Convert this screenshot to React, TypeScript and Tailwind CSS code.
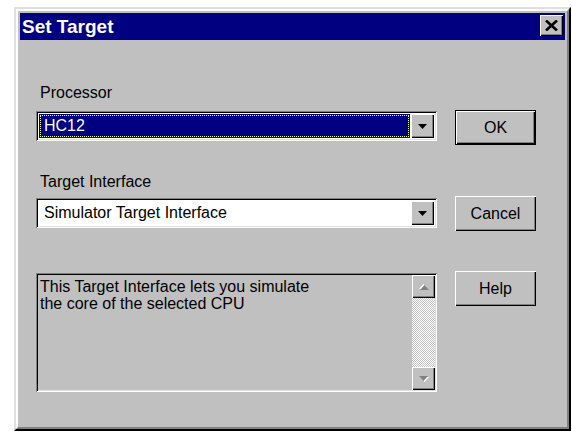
import React from 'react'

const raised =
  'bg-[#c0c0c0] shadow-[inset_1px_1px_#fff,inset_-1px_-1px_#000,inset_-2px_-2px_#808080]'
const sunken =
  'shadow-[inset_1px_1px_#808080,inset_-1px_-1px_#fff,inset_2px_2px_#000,inset_-2px_-2px_#dfdfdf]'

function DownArrow({ color = '#000' }: { color?: string }) {
  return (
    <svg width="9" height="5" viewBox="0 0 9 5">
      <path d="M0 0h9L4.5 5z" fill={color} />
    </svg>
  )
}

function Combo({ value, selected }: { value: string; selected?: boolean }) {
  return (
    <div className={`w-[401px] h-[30px] bg-white p-[3px] flex ${sunken}`}>
      <div className="flex-1 pr-[1px]">
        <div
          className={`h-full flex items-center pl-[5px] text-[16px] ${
            selected
              ? 'bg-[#000080] text-white outline-1 outline-dotted outline-[#ffff80] -outline-offset-2'
              : 'text-black'
          }`}
        >
          {value}
        </div>
      </div>
      <div className={`w-[23px] h-full flex items-center justify-center ${raised}`}>
        <DownArrow />
      </div>
    </div>
  )
}

function Button({ label, primary }: { label: string; primary?: boolean }) {
  return (
    <button
      className={`w-[81px] h-[35px] text-[16px] text-black ${
        primary ? 'border border-black' : ''
      } ${raised}`}
    >
      {label}
    </button>
  )
}

function ScrollArrow({ up }: { up?: boolean }) {
  return (
    <div className={`w-[23px] h-[23px] flex items-center justify-center ${raised}`}>
      <svg width="10" height="6" viewBox="0 0 10 6" className={up ? 'rotate-180' : ''}>
        <path d="M1 1h9L5.5 6z" fill="#fff" />
        <path d="M0 0h9L4.5 5z" fill="#808080" />
      </svg>
    </div>
  )
}

export default function App() {
  return (
    <div className="min-h-screen bg-white pt-[7px] pl-[14px] font-['Liberation_Sans',Arial,sans-serif]">
      <div className="w-[557px] h-[424px] border-2 border-t-[#dfdfdf] border-l-[#dfdfdf] border-b-black border-r-black">
        <div className="h-full border-2 border-t-white border-l-white border-b-[#808080] border-r-[#808080] bg-[#c0c0c0] p-[2px] flex flex-col">
          {/* caption */}
          <div className="h-[27px] bg-[#000080] flex items-start justify-between pl-[2px] pr-[2px] pt-[2px]">
            <span className="text-white font-bold text-[19px] leading-[23px]">
              Set Target
            </span>
            <div className={`w-[23px] h-[21px] flex items-center justify-center ${raised}`}>
              <svg width="13" height="11" viewBox="0 0 13 11">
                <path d="M1 0.5L12 10.5M12 0.5L1 10.5" stroke="#000" strokeWidth="2.6" />
              </svg>
            </div>
          </div>

          {/* body */}
          <div className="flex-1 pl-[16px] pt-[44px] flex gap-[18px]">
            <div className="flex flex-col text-[16px] text-black">
              <div className="leading-[18px] pl-[4px]">Processor</div>
              <div className="mt-[9px]">
                <Combo value="HC12" selected />
              </div>
              <div className="leading-[18px] pl-[4px] mt-[32px]">Target Interface</div>
              <div className="mt-[7px]">
                <Combo value="Simulator Target Interface" />
              </div>
              <div className={`mt-[45px] w-[401px] h-[119px] bg-[#c0c0c0] p-[2px] flex ${sunken}`}>
                <div className="flex-1 pl-[2px] pt-[3px] leading-[17px]">
                  This Target Interface lets you simulate
                  <br />
                  the core of the selected CPU
                </div>
                <div className="w-[23px] flex flex-col">
                  <ScrollArrow up />
                  <div className="flex-1 bg-[repeating-conic-gradient(#fff_0_25%,#c0c0c0_0_50%)] bg-[length:2px_2px]" />
                  <ScrollArrow />
                </div>
              </div>
            </div>

            <div className="flex flex-col">
              <div className="mt-[26px]">
                <Button label="OK" primary />
              </div>
              <div className="mt-[51px]">
                <Button label="Cancel" />
              </div>
              <div className="mt-[40px]">
                <Button label="Help" />
              </div>
            </div>
          </div>
        </div>
      </div>
    </div>
  )
}
